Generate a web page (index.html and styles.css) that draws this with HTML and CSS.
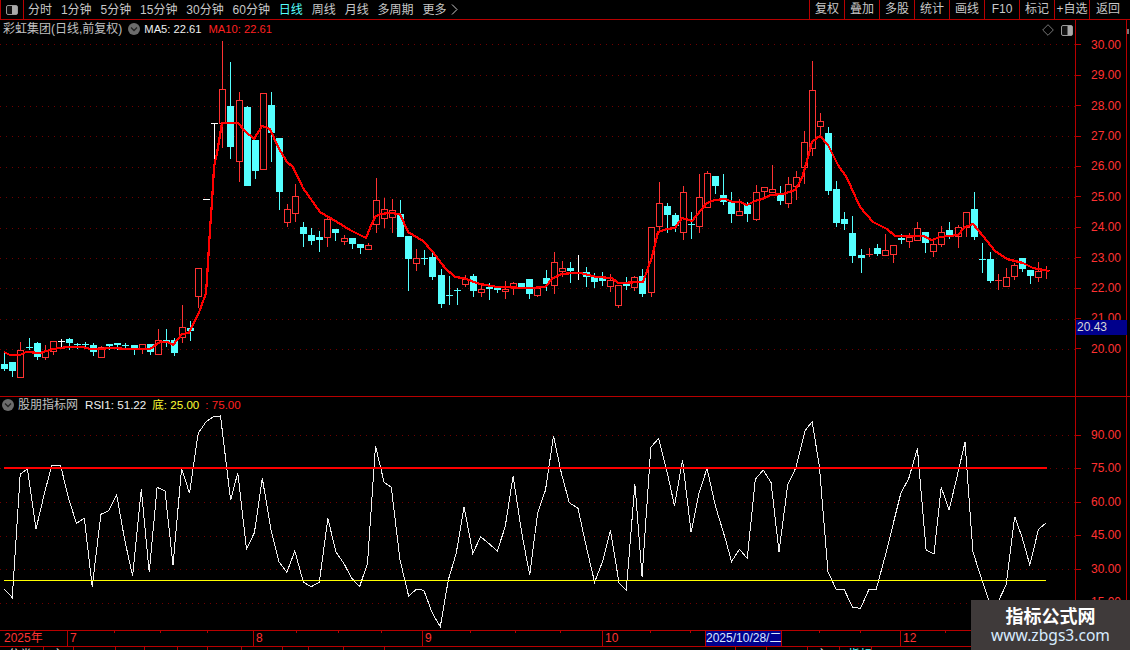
FILE: index.html
```html
<!DOCTYPE html>
<html lang="zh">
<head>
<meta charset="utf-8">
<title>彩虹集团 日线</title>
<link rel="stylesheet" href="styles.css">
</head>
<body>
<div class="app">
  <header class="toolbar">
    <div class="tool-icon">
      <svg width="12" height="10" viewBox="0 0 12 10"><rect x="0.5" y="0.5" width="11" height="9" rx="1.5" fill="#111" stroke="#999"/><rect x="6" y="1" width="5" height="8" fill="#aaa"/></svg>
    </div>
    <nav class="periods">
      <span>分时</span><span>1分钟</span><span>5分钟</span><span>15分钟</span><span>30分钟</span><span>60分钟</span>
      <span class="active">日线</span><span>周线</span><span>月线</span><span>多周期</span>
      <span class="more">更多<svg width="7" height="11" viewBox="0 0 7 11"><polyline points="1,0.5 6,5.5 1,10.5" fill="none" stroke="#c8c8c8"/></svg></span>
    </nav>
    <nav class="actions">
      <span>复权</span><span>叠加</span><span>多股</span><span>统计</span><span>画线</span><span>F10</span><span>标记</span><span>+自选</span><span class="back">返回</span>
    </nav>
  </header>

  <section class="pane price-pane">
    <div class="plot">
      <svg id="price" class="chart" width="1075" height="376" viewBox="0 20 1075 376"></svg>
      <div class="legend price-legend">
        <span class="title">彩虹集团(日线,前复权)</span>
        <svg class="chev" width="12" height="12" viewBox="0 0 12 12"><circle cx="6" cy="6" r="6" fill="#6c6c6c"/><polyline points="3,4.5 6,7.5 9,4.5" fill="none" stroke="#222" stroke-width="1.3"/></svg>
        <span class="val white">MA5: 22.61</span>
        <span class="val red">MA10: 22.61</span>
      </div>
      <div class="corner-tools">
        <svg width="12" height="12" viewBox="0 0 12 12"><polygon points="6,0.7 11.3,6 6,11.3 0.7,6" fill="none" stroke="#777"/></svg>
        <svg width="12" height="11" viewBox="0 0 12 11"><rect x="0.5" y="0.5" width="11" height="10" rx="1.5" fill="#111" stroke="#999"/><rect x="6.5" y="1" width="4.5" height="9" fill="#aaa"/></svg>
      </div>
    </div>
    <div class="axis price-axis">
      <div class="tick">30.00</div><div class="tick">29.00</div><div class="tick">28.00</div><div class="tick">27.00</div>
      <div class="tick">26.00</div><div class="tick">25.00</div><div class="tick">24.00</div><div class="tick">23.00</div>
      <div class="tick">22.00</div><div class="tick">21.00</div><div class="tick">20.00</div>
      <div class="cursor-price">20.43</div>
    </div>
    <div class="strip"></div>
  </section>

  <section class="pane rsi-pane">
    <div class="plot">
      <svg id="rsi" class="chart" width="1075" height="233" viewBox="0 397 1075 233"></svg>
      <div class="legend rsi-legend">
        <svg class="chev" width="12" height="12" viewBox="0 0 12 12"><circle cx="6" cy="6" r="6" fill="#6c6c6c"/><polyline points="3,4.5 6,7.5 9,4.5" fill="none" stroke="#222" stroke-width="1.3"/></svg>
        <span class="title">股朋指标网</span>
        <span class="val white">RSI1: 51.22</span>
        <span class="val yellow">底: 25.00</span>
        <span class="val red">: 75.00</span>
      </div>
    </div>
    <div class="axis rsi-axis">
      <div class="tick">90.00</div><div class="tick">75.00</div><div class="tick">60.00</div>
      <div class="tick">45.00</div><div class="tick">30.00</div><div class="tick">15.00</div>
    </div>
    <div class="strip"></div>
  </section>

  <div id="timeline" class="timeline"></div>
  <footer id="tabs" class="tabs"></footer>
</div>

<aside class="watermark">
  <div class="wm-title">指标公式网</div>
  <div class="wm-url">www.zbgs3.com</div>
</aside>

<script src="chart.js"></script>
</body>
</html>
```

FILE: styles.css
```css
* { box-sizing: border-box; }
html, body { margin: 0; padding: 0; background: #000; }
body {
  width: 1130px;
  height: 650px;
  overflow: hidden;
  position: relative;
  font: 12px/16px "Liberation Sans", "Noto Sans CJK SC", sans-serif;
  color: #c8c8c8;
}
.app { display: flex; flex-direction: column; height: 650px; }

/* toolbar */
.toolbar {
  display: flex;
  flex: none;
  height: 20px;
  border-bottom: 1px solid #b80000;
}
.tool-icon {
  width: 24px;
  display: flex;
  align-items: center;
  justify-content: center;
  border-left: 1px solid #b80000;
  border-right: 1px solid #b80000;
}
.periods {
  display: flex;
  align-items: center;
  gap: 8.9px;
  padding-left: 4px;
  flex: 1;
}
.periods span { white-space: nowrap; }
.periods .active { color: #55ffff; }
.more { display: flex; align-items: center; gap: 5px; }
.actions { display: flex; height: 19px; }
.actions span {
  width: 35px;
  border-left: 1px solid #b80000;
  text-align: center;
  line-height: 19px;
  white-space: nowrap;
}
.actions .back { width: 41px; padding-right: 4px; }

/* panes */
.pane { display: flex; flex: none; }
.price-pane { height: 377px; border-bottom: 1px solid #b80000; }
.rsi-pane { height: 234px; border-bottom: 1px solid #b80000; }
.plot { position: relative; width: 1075px; flex: none; }
.chart { display: block; }
.axis {
  position: relative;
  width: 51px;
  flex: none;
  border-left: 1px solid #b80000;
  color: #ff3232;
}
.price-axis { padding-top: 9.8px; }
.price-axis .tick { height: 30.4px; line-height: 30.4px; }
.rsi-axis { padding-top: 21.5px; }
.rsi-axis .tick { height: 33.5px; line-height: 33.5px; }
.tick { display: flex; align-items: center; }
.tick::before {
  content: "";
  width: 5px;
  height: 1px;
  margin-right: 10px;
  background: #b80000;
}
.cursor-price {
  position: absolute;
  left: 0;
  top: 300px;
  width: 51px;
  height: 15px;
  line-height: 15px;
  padding-left: 1px;
  background: #00008c;
  color: #d8d8d8;
}
.strip { flex: 1; border-left: 1px solid #b80000; }
.price-pane .strip::before {
  content: "";
  display: block;
  width: 2px;
  height: 5px;
  margin-top: 9px;
  background: #777;
}

/* legends over the plots */
.legend {
  position: absolute;
  display: flex;
  align-items: center;
  white-space: nowrap;
}
.price-legend { left: 3px; top: 1px; height: 16px; }
.rsi-legend { left: 2px; top: 0; height: 16px; }
.title { color: #c0c0c0; }
.chev { flex: none; }
.price-legend .chev { margin: 0 4px 0 6px; }
.rsi-legend .chev { margin-right: 4px; }
.val { font-size: 11.6px; }
.price-legend .val { font-size: 11.2px; margin-right: 7px; }
.rsi-legend .title { margin-right: 7px; }
.rsi-legend .val { margin-right: 6px; }
.white { color: #f0f0f0; }
.red { color: #ff2020; }
.yellow { color: #ffff33; }
.corner-tools {
  position: absolute;
  right: 2px;
  top: 4px;
  display: flex;
  align-items: center;
  gap: 7px;
}

/* time axis */
.timeline {
  position: relative;
  flex: none;
  height: 16px;
  border-bottom: 1px solid #b80000;
  color: #ff3232;
}
.t-mark {
  position: absolute;
  top: 0;
  height: 15px;
  border-left: 1px solid #b80000;
  padding-left: 2px;
  line-height: 15px;
}
.t-minor {
  position: absolute;
  top: 0;
  width: 1px;
  height: 2px;
  background: #b80000;
}
.t-year { position: absolute; left: 4px; top: 0; line-height: 15px; }
.t-cursor {
  position: absolute;
  left: 705px;
  top: 0;
  width: 77px;
  height: 15px;
  line-height: 15px;
  background: #00008c;
  border-left: 1px solid #b80000;
  border-right: 1px solid #b80000;
  color: #d8e8ff;
  text-align: center;
  white-space: nowrap;
}

/* clipped bottom tabs */
.tabs { display: flex; flex: none; height: 3px; overflow: hidden; }
.tab {
  flex: none;
  height: 3px;
  border-right: 1px solid #b80000;
  padding-left: 8px;
  color: #e8e8e8;
  line-height: 16px;
  overflow: hidden;
  white-space: nowrap;
}
.tab.cyan { color: #55ffff; }

/* watermark */
.watermark {
  position: absolute;
  left: 971px;
  top: 600px;
  width: 159px;
  height: 50px;
  padding-top: 5px;
  background: #3f3a3a;
  text-align: center;
}
.wm-title {
  font: 700 18px/20px "Noto Sans CJK SC", sans-serif;
  color: #fff;
}
.wm-url {
  font: 15.6px/20px "Noto Sans", sans-serif;
  color: #d8ecff;
}
```

FILE: chart.js
```js
// Daily candles: [kind, high, bodyTop, bodyBottom, low]; c = falling, r = rising, w = flat
var candles = [
['c',352,364,369,371],['c',362,362,371,377],['r',342,350,377,377],['c',338,347,348,350],['c',342,343,357,360],
['r',345,351,357,360],['r',341,341,351,355],['w',339,341,342,347],['c',338,339,343,350],['c',343,344,345,349],
['c',342,344,345,349],['c',343,345,352,356],['r',346,347,357,357],['c',344,344,346,350],['c',343,343,345,350],
['c',343,345,346,350],['c',345,345,349,355],['r',344,344,349,354],['c',344,344,352,355],['r',329,340,354,354],
['c',329,340,342,347],['c',338,340,353,356],['r',305,327,337,343],['c',321,328,331,341],['r',268,268,296,308],
['w',199,199,200,200],['w',123,123,124,164],['r',41,89,123,148],['c',62,106,147,159],['r',92,100,161,182],
['c',106,107,186,186],['c',140,140,171,179],['r',93,93,169,169],['c',92,105,133,162],['c',138,138,192,210],
['r',204,209,222,227],['r',184,196,213,222],['c',222,227,234,247],['c',228,235,241,245],['c',231,237,240,252],
['r',217,219,237,247],['c',229,229,233,241],['r',235,238,241,245],['c',238,238,244,249],['c',244,244,248,254],
['r',243,245,249,249],['r',178,200,224,233],['r',198,209,218,228],['r',199,210,217,233],['c',200,214,237,237],
['c',236,236,259,291],['r',249,258,263,271],['c',250,258,259,265],['c',252,257,277,280],['c',269,275,304,308],
['c',276,295,296,305],['c',288,290,291,305],['r',275,279,284,287],['c',274,276,291,297],['r',285,289,292,297],
['c',283,287,289,300],['c',287,287,290,293],['r',281,289,291,299],['r',282,283,286,295],['c',283,283,287,287],
['c',279,279,294,299],['r',288,288,295,297],['c',270,278,284,291],['r',252,262,285,294],['r',261,268,271,277],
['c',262,268,271,283],['w',255,273,274,280],['c',267,272,277,287],['c',273,277,282,288],['c',272,278,281,286],
['r',274,280,286,292],['r',285,285,305,308],['c',277,283,286,290],['r',276,277,287,291],['c',269,276,294,297],
['r',227,227,292,297],['r',182,203,226,233],['c',203,206,215,233],['c',213,215,226,232],['r',186,192,232,240],
['c',212,224,225,239],['r',174,197,226,233],['r',171,173,207,207],['c',176,176,186,194],['c',174,195,202,205],
['c',192,202,214,223],['r',199,211,215,216],['c',202,205,214,222],['r',185,192,219,221],['r',187,187,191,198],
['r',165,189,192,193],['c',186,193,201,205],['r',177,184,203,208],['r',171,177,186,200],['r',131,142,167,184],
['r',61,90,148,156],['r',113,121,126,135],['c',127,133,191,195],['c',181,189,223,227],['c',212,219,224,230],
['c',216,233,256,263],['c',249,255,258,273],['r',248,254,255,257],['c',244,248,254,256],['r',234,250,255,256],
['r',245,245,254,263],['c',234,238,240,244],['r',233,237,241,248],['r',222,228,240,240],['c',232,232,243,253],
['r',240,244,251,257],['r',226,232,244,247],['c',222,230,235,239],['r',225,227,236,248],['r',212,212,227,237],
['c',192,209,237,240],['c',243,259,260,273],['c',252,259,281,283],['r',274,280,281,290],['r',268,277,286,286],
['r',263,265,276,280],['c',258,258,269,272],['c',270,270,276,284],['r',262,271,277,282],['r',266,270,271,279]
];

var ma = "4,352 10,355 20,355 26,352 40,353 53,349 68,347 83,347 90,349 100,349 110,348 130,349 150,349 160,342 168,342 173,345 182,334 189,333 200,310 206,293 207,278 208,262 210,230 212,202 213,185 214,167 217,153 220,135 222,123 238,123 245,131 254,139 262,126 270,129 278,147 287,162 293,167 303,188 320,212 337,222 350,230 366,238 370,228 375,217 380,214 390,213 400,214 408,232 423,241 433,252 445,268 455,277 463,278 480,284 497,287 530,288 545,287 553,278 562,274 573,273 580,273 597,277 612,278 618,283 643,282 652,257 658,232 667,229 675,228 682,218 692,221 707,203 715,200 725,199 733,202 740,202 747,205 755,201 763,199 770,195 783,194 795,190 802,178 808,157 812,142 820,136 828,145 838,165 847,178 860,207 873,222 887,229 895,236 923,236 932,240 940,237 958,235 965,227 973,224 983,236 995,251 1007,259 1023,263 1033,268 1049,271";

var rsi = "6,537 17,563 28,193 38,177 50,357 62,247 72,165 84,165 95,265 106,340 117,325 128,530 140,313 151,302 162,255 173,390 184,498 196,238 207,487 218,232 229,243 240,465 252,175 263,250 275,70 286,35 296,20 306,18 320,270 330,188 342,418 353,368 364,205 376,360 387,455 398,487 409,423 421,517 432,530 443,517 455,325 466,425 477,460 488,505 499,530 510,460 521,108 533,217 543,232 555,450 567,558 578,538 588,541 600,610 611,650 622,510 633,430 644,290 656,430 667,380 678,400 690,423 701,350 712,198 724,370 735,495 746,310 757,240 768,78 779,190 790,278 802,295 813,405 825,517 836,455 847,360 859,520 869,540 881,222 891,500 903,112 914,85 925,180 936,287 947,150 959,367 970,250 981,175 993,290 1007,390 1015,455 1026,418 1037,445 1048,208 1059,180 1070,218 1081,425 1093,225 1104,175 1117,62 1127,35 1137,170 1149,485 1160,537 1171,537 1183,592 1194,595 1206,537 1216,537 1228,440 1250,250 1261,205 1273,115 1285,420 1296,432 1306,232 1317,300 1328,200 1339,97 1350,425 1361,500 1372,570 1385,575 1396,525 1408,320 1418,380 1429,465 1441,358 1451,340";

var RED = '#ff3232', CYAN = '#55ffff', GRID = '#700000', NS = 'http://www.w3.org/2000/svg';

function add(svg, tag, attrs) {
  var el = document.createElementNS(NS, tag);
  for (var k in attrs) el.setAttribute(k, attrs[k]);
  el.setAttribute('shape-rendering', 'crispEdges');
  svg.appendChild(el);
  return el;
}
function grid(svg, ys) {
  ys.forEach(function (y) {
    add(svg, 'line', { x1: 0, x2: 1075, y1: y + 0.5, y2: y + 0.5, stroke: GRID, 'stroke-dasharray': '1 5' });
  });
}

var price = document.getElementById('price');
grid(price, [44, 75, 106, 136, 167, 197, 228, 258, 288, 319, 349]);

candles.forEach(function (c, i) {
  var x = Math.round(4.3 + 8.078 * i) + 0.5, kind = c[0], hi = c[1], top = c[2], bot = c[3], lo = c[4];
  var color = kind === 'c' ? CYAN : kind === 'w' ? '#ffffff' : RED;
  add(price, 'line', { x1: x, x2: x, y1: hi, y2: lo, stroke: color });
  if (bot - top <= 1) {
    add(price, 'line', { x1: x - 3.5, x2: x + 3.5, y1: top + 0.5, y2: top + 0.5, stroke: color });
  } else if (kind === 'r') {
    add(price, 'rect', { x: x - 3, y: top + 0.5, width: 6, height: bot - top, fill: '#000', stroke: color });
  } else {
    add(price, 'rect', { x: x - 3.5, y: top, width: 7, height: bot - top, fill: color });
  }
});
add(price, 'polyline', { points: ma, fill: 'none', stroke: '#ff0000', 'stroke-width': 2.2 });

var rsiSvg = document.getElementById('rsi');
grid(rsiSvg, [435, 468, 502, 536, 569, 603]);
add(rsiSvg, 'polyline', {
  points: rsi.split(' ').map(function (p) {
    var a = p.split(',');
    return (a[0] / 1.3876).toFixed(1) + ',' + (410 + a[1] / 3).toFixed(1);
  }).join(' '),
  fill: 'none', stroke: '#f0f0f0'
});
add(rsiSvg, 'rect', { x: 4, y: 467, width: 1043, height: 2, fill: '#ff0000' });
add(rsiSvg, 'rect', { x: 4, y: 580, width: 1042, height: 1, fill: '#ffff00' });

// time axis
var tl = document.getElementById('timeline');
function put(cls, text, left) {
  var d = document.createElement('div');
  d.className = cls;
  if (text) d.textContent = text;
  if (left !== null) d.style.left = left + 'px';
  tl.appendChild(d);
}
put('t-year', '2025年', null);
[[67, '7'], [253, '8'], [422, '9'], [602, '10'], [900, '12']].forEach(function (m) { put('t-mark', m[1], m[0]); });
[114, 160, 207, 296, 338, 381, 470, 515, 560, 650, 690, 819, 860, 945].forEach(function (x) { put('t-minor', '', x); });
put('t-cursor', '2025/10/28/二', null);

// clipped tab row
var tabs = document.getElementById('tabs');
var edges = [[43, '分类'], [73, '主'], [115, ''], [144, ''], [177, ''], [207, ''], [241, ''], [282, ''], [308, ''], [343, ''], [384, ''], [735, ''], [766, ''], [807, ''], [839, '主'], [871, '指标', 'cyan']];
var prev = 0;
edges.forEach(function (e) {
  var t = document.createElement('div');
  t.className = 'tab' + (e[2] ? ' ' + e[2] : '');
  t.style.width = (e[0] - prev + 1) + 'px';
  t.textContent = e[1];
  tabs.appendChild(t);
  prev = e[0] + 1;
});
```
